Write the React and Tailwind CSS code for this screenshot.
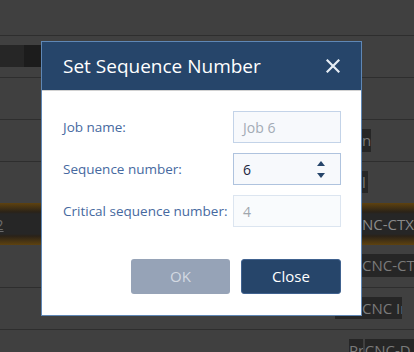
import React from "react";

const Line = () => <div className="h-px bg-[#2e2e2e]" />;

const BgBox = ({ className, children }) => (
  <div className={`bg-[#262626] text-[15px] leading-[23px] text-[#7a7a7a] overflow-hidden whitespace-nowrap ${className}`}>
    {children}
  </div>
);

const Field = ({ label, children }) => (
  <>
    <div className="text-[13.5px] text-[#4669a0] whitespace-nowrap">{label}</div>
    {children}
  </>
);

const App = () => {
  return (
    <div className="relative w-[414px] h-[352px] overflow-hidden bg-[#404040] font-['Open_Sans',sans-serif]">
      {/* page behind the dialog */}
      <div className="flex flex-col">
        <div className="h-[35px]" />
        <Line />
        <div className="h-[9px]" />
        <div className="h-[22px] flex">
          <div className="w-[24px] bg-[#262626]" />
          <div className="w-[17px] bg-[#1c1c1c]" />
        </div>
        <div className="h-[10px]" />
        <Line />
        <div className="h-[41px]" />
        <Line />
        <div className="h-[41px] pt-[9px] pl-[362px]">
          <BgBox className="w-[9px] h-[23px]">n</BgBox>
        </div>
        <Line />
        <div className="h-[41px] pt-[9px] pl-[362px]">
          <BgBox className="w-[6px] h-[22px]">l</BgBox>
        </div>
        <div className="h-[42px] flex items-center justify-between bg-[linear-gradient(to_bottom,#5e420f,#2a2218_9px,#262626_11px,#262626_calc(100%-11px),#2a2218_calc(100%-9px),#5e420f)]">
          <span className="-ml-[5px] text-[15px] text-[#6a6a6a] underline">2</span>
          <span className="w-[52px] overflow-hidden whitespace-nowrap text-[15px] text-[#8a8a8a]">NC-CTX-</span>
        </div>
        <div className="h-[42px] pt-[9px] pl-[362px]">
          <BgBox className="w-[52px] h-[23px]">CNC-CTX</BgBox>
        </div>
        <Line />
        <div className="h-[41px] pt-[9px] pl-[335px]">
          <BgBox className="w-[67px] h-[22px] pl-[27px]">CNC In</BgBox>
        </div>
        <Line />
        <div className="h-[22px] pt-[9px] pl-[349px] flex gap-[2px]">
          <BgBox className="w-[14px] h-[20px]">Pre</BgBox>
          <BgBox className="w-[50px] h-[20px]">CNC-D</BgBox>
        </div>
      </div>

      {/* dialog */}
      <div className="absolute left-[41px] top-[41px] w-[321px] border border-[#5f87b5] bg-white">
        <div className="h-[49px] bg-[#26456a] border-b border-[#d2d2d2] flex items-center justify-between pl-[21px] pr-[21px]">
          <h1 className="text-[19px] text-white leading-none">Set Sequence Number</h1>
          <svg width="14" height="14" viewBox="0 0 14 14" className="shrink-0">
            <path d="M1.5 1.5 L12.5 12.5 M12.5 1.5 L1.5 12.5" stroke="#e6edf5" strokeWidth="2.2" strokeLinecap="square" />
          </svg>
        </div>
        <div className="pt-[20px] pl-[21px] pr-[20px] pb-[21px]">
          <div className="grid grid-cols-[1fr_108px] gap-y-[10px] items-center">
            <Field label="Job name:">
              <div className="h-[32px] border border-[#c3d3e8] bg-[#f7f9fc] px-[9px] flex items-center text-[14px] text-[#a3abb5]">
                Job 6
              </div>
            </Field>
            <Field label="Sequence number:">
              <div className="h-[32px] border border-[#afc3de] bg-[#f7f9fc] pl-[9px] pr-[15px] flex items-center text-[14px] text-[#1b2640]">
                <span className="flex-1">6</span>
                <div className="flex flex-col gap-[7px]">
                  <svg width="8" height="5" viewBox="0 0 8 5">
                    <path d="M0 5 L4 0 L8 5 Z" fill="#26456a" />
                  </svg>
                  <svg width="8" height="5" viewBox="0 0 8 5">
                    <path d="M0 0 L8 0 L4 5 Z" fill="#26456a" />
                  </svg>
                </div>
              </div>
            </Field>
            <Field label="Critical sequence number:">
              <div className="h-[32px] border border-[#dce5f0] bg-[#f9fbfd] px-[9px] flex items-center text-[14px] text-[#a0a6ad]">
                4
              </div>
            </Field>
          </div>
          <div className="mt-[32px] flex justify-end gap-[11px]">
            <button className="w-[99px] h-[35px] rounded-[3px] bg-[#96a3b7] text-[15px] text-[#d3d9e2]">OK</button>
            <button className="w-[100px] h-[35px] rounded-[3px] bg-[#26456a] border border-[#40628f] text-[15px] text-white">Close</button>
          </div>
        </div>
      </div>
    </div>
  );
};

export default App;
